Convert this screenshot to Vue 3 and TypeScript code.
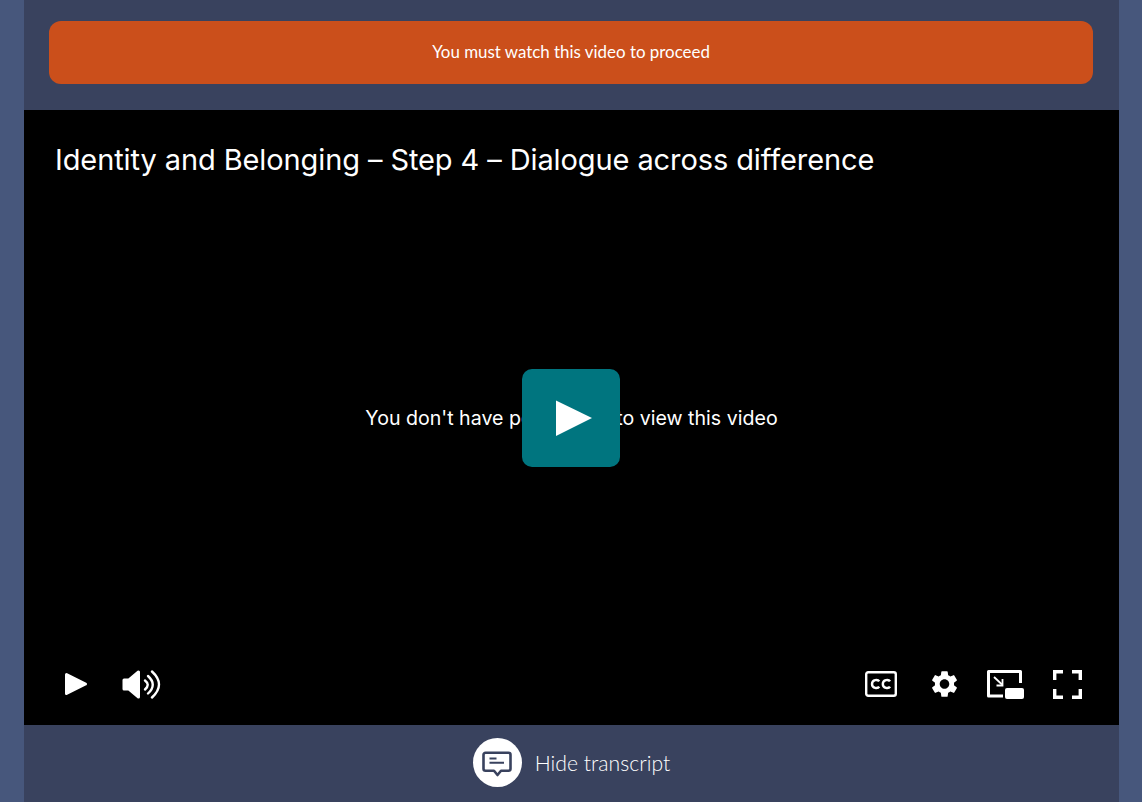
<script setup lang="ts">
const title = 'Identity and Belonging – Step 4 – Dialogue across difference'
</script>

<template>
  <div class="page">
    <main class="panel">
      <div class="notice-wrap">
        <div class="notice">You must watch this video to proceed</div>
      </div>

      <section class="video">
        <h1 class="video-title">{{ title }}</h1>
        <div class="video-body">
          <p class="denied">You don't have permission to view this video</p>
          <button class="big-play" aria-label="Play">
            <svg width="38" height="38" viewBox="0 0 38 38">
              <path d="M1 1.5 L37 19 L1 37 Z" fill="#fff" />
            </svg>
          </button>
        </div>
        <div class="controls">
          <div class="controls-group">
            <svg width="24" height="24" viewBox="0 0 24 24">
              <path d="M2.5 2.5 L21.5 12 L2.5 21.5 Z" fill="#fff" stroke="#fff" stroke-width="3" stroke-linejoin="round" />
            </svg>
            <svg class="speaker" width="41" height="29" viewBox="0 0 41 29" fill="none">
              <path d="M3 10 H8 L17.5 2 V27 L8 19 H3 Z" fill="#fff" stroke="#fff" stroke-width="3" stroke-linejoin="round" />
              <path d="M24 10.5 Q29.5 14.5 24 19.5" stroke="#fff" stroke-width="2.4" stroke-linecap="round" />
              <path d="M27 6 Q36.5 14.5 27 23.5" stroke="#fff" stroke-width="2.4" stroke-linecap="round" />
              <path d="M31 1.5 Q45 14.5 31 27.5" stroke="#fff" stroke-width="2.4" stroke-linecap="round" />
            </svg>
          </div>
          <div class="controls-group">
            <svg width="32" height="26" viewBox="0 0 32 26" fill="none">
              <rect x="1.2" y="1.2" width="29.6" height="23.6" rx="2" stroke="#fff" stroke-width="2.4" />
              <path d="M14.2 10.4 C13 8.3 7 8.3 7 13 C7 17.7 13 17.7 14.2 15.6" stroke="#fff" stroke-width="2.4" />
              <path d="M25 10.4 C23.8 8.3 17.8 8.3 17.8 13 C17.8 17.7 23.8 17.7 25 15.6" stroke="#fff" stroke-width="2.4" />
            </svg>
            <svg class="gear" width="25" height="26" viewBox="2.7 2.2 18.6 19.6">
              <path d="M19.14 12.94c.04-.3.06-.61.06-.94 0-.32-.02-.64-.07-.94l2.03-1.58a.49.49 0 0 0 .12-.61l-1.92-3.32a.488.488 0 0 0-.59-.22l-2.39.96c-.5-.38-1.03-.7-1.62-.94l-.36-2.54a.484.484 0 0 0-.48-.41h-3.84c-.24 0-.43.17-.47.41l-.36 2.54c-.59.24-1.13.57-1.62.94l-2.39-.96c-.22-.08-.47 0-.59.22L2.74 8.87c-.12.21-.08.47.12.61l2.03 1.58c-.05.3-.09.63-.09.94s.02.64.07.94l-2.03 1.58a.49.49 0 0 0-.12.61l1.92 3.32c.12.22.37.29.59.22l2.39-.96c.5.38 1.03.7 1.62.94l.36 2.54c.05.24.24.41.48.41h3.84c.24 0 .44-.17.47-.41l.36-2.54c.59-.24 1.13-.56 1.62-.94l2.39.96c.22.08.47 0 .59-.22l1.92-3.32c.12-.22.07-.47-.12-.61l-2.01-1.58zM12 15.6c-1.98 0-3.6-1.62-3.6-3.6s1.62-3.6 3.6-3.6 3.6 1.62 3.6 3.6-1.62 3.6-3.6 3.6z" fill="#fff" />
            </svg>
            <svg class="pip" width="37" height="29" viewBox="0 0 37 29" fill="none">
              <path d="M16 26 H1.5 V1.5 H33.5 V13" stroke="#fff" stroke-width="3" stroke-linejoin="round" />
              <path d="M7 7 L15 14.5" stroke="#fff" stroke-width="1.8" />
              <path d="M15.5 9 V15.5 H9.5" stroke="#fff" stroke-width="1.8" />
              <rect x="18" y="18" width="19" height="11" rx="2" fill="#fff" />
            </svg>
            <svg class="full" width="29" height="29" viewBox="0 0 29 29" fill="none">
              <path d="M1.7 10 V1.7 H10 M19 1.7 H27.3 V10 M27.3 19 V27.3 H19 M10 27.3 H1.7 V19" stroke="#fff" stroke-width="3.4" />
            </svg>
          </div>
        </div>
      </section>

      <footer class="transcript">
        <span class="transcript-icon">
          <svg width="30" height="28" viewBox="0 0 30 28" fill="none">
            <path d="M3.5 3.8 H26.5 C27.6 3.8 28.5 4.7 28.5 5.8 V19.7 C28.5 20.8 27.6 21.7 26.5 21.7 H19 L15.5 26 L12 21.7 H3.5 C2.4 21.7 1.5 20.8 1.5 19.7 V5.8 C1.5 4.7 2.4 3.8 3.5 3.8 Z" stroke="#39425e" stroke-width="2.6" stroke-linejoin="round" />
            <path d="M7.5 9.5 H14.5 M7.5 13.8 H22" stroke="#39425e" stroke-width="2" />
          </svg>
        </span>
        <span class="transcript-label">Hide transcript</span>
      </footer>
    </main>
  </div>
</template>

<style scoped>
.page {
  height: 802px;
  padding: 0 23px 0 24px;
  background: #47577c;
  overflow: hidden;
}
.panel {
  height: 802px;
  display: flex;
  flex-direction: column;
  background: #39425e;
}
.notice-wrap {
  height: 110px;
  padding: 21px 26px 0 25px;
  box-sizing: border-box;
}
.notice {
  height: 63px;
  display: flex;
  align-items: center;
  justify-content: center;
  border-radius: 12px;
  background: #cb4f1b;
  color: #fff;
  font-family: Lato, sans-serif;
  font-size: 16.9px;
  padding-bottom: 2px;
  box-sizing: border-box;
}
.video {
  height: 615px;
  display: flex;
  flex-direction: column;
  background: #000;
  color: #fff;
  font-family: Inter, sans-serif;
}
.video-title {
  margin: 0;
  padding: 33px 31px 0;
  font-size: 29px;
  line-height: 34px;
  font-weight: 400;
  letter-spacing: -0.1px;
}
.video-body {
  position: relative;
  flex: 1;
  display: flex;
  align-items: center;
  justify-content: center;
}
.denied {
  margin: 16px 0 0;
  font-size: 19.6px;
  line-height: 24px;
}
.big-play {
  position: absolute;
  left: 498px;
  top: 192px;
  width: 98px;
  height: 98px;
  padding: 0 0 0 6px;
  display: flex;
  align-items: center;
  justify-content: center;
  border: 0;
  border-radius: 10px;
  background: #00757f;
}
.controls {
  height: 82px;
  padding: 0 37px 0 40px;
  box-sizing: border-box;
  display: flex;
  justify-content: space-between;
  align-items: center;
}
.controls-group {
  display: flex;
  align-items: center;
}
.speaker {
  margin-left: 33px;
}
.gear {
  margin-left: 35px;
}
.pip {
  margin-left: 30px;
}
.full {
  margin-left: 29px;
}
.transcript {
  flex: 1;
  display: flex;
  align-items: center;
  justify-content: center;
  gap: 13px;
  padding-bottom: 2px;
}
.transcript-icon {
  width: 49px;
  height: 49px;
  display: flex;
  align-items: center;
  justify-content: center;
  border-radius: 50%;
  background: #fff;
}
.transcript-label {
  color: #fff;
  font-family: Lato, sans-serif;
  font-weight: 300;
  font-size: 21.2px;
}
</style>

<style>
body {
  background: #47577c;
}
</style>
